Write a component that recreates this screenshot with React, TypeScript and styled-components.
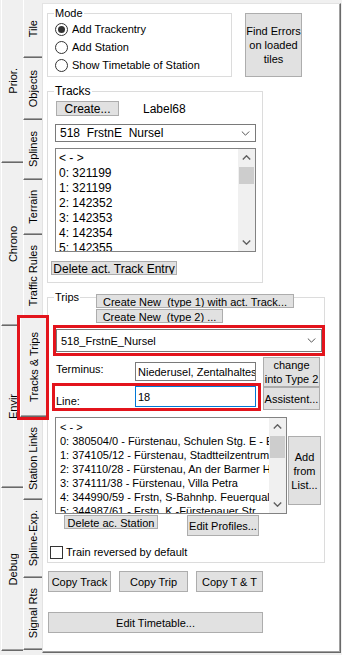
import styled, { createGlobalStyle, css } from 'styled-components';

const GlobalStyle = createGlobalStyle`
  html, body {
    margin: 0;
    padding: 0;
    background: #f0f0f0;
  }
  body {
    font-family: "Liberation Sans", Arial, sans-serif;
    font-size: 11px;
    color: #000;
  }
`;

const Window = styled.div`
  display: flex;
  width: 342px;
  height: 655px;
  overflow: hidden;
  background: #f0f0f0;
`;

// vertical tab strips on the left
const TabColumn = styled.div<{ $w: number; $ml?: number }>`
  display: flex;
  flex-direction: column;
  flex-shrink: 0;
  width: ${(p) => p.$w}px;
  margin-left: ${(p) => p.$ml ?? 0}px;
  height: 651px;
`;

const Tab = styled.div<{ $h?: number; $active?: boolean }>`
  ${(p) => (p.$h ? `height: ${p.$h}px;` : 'flex: 1;')}
  flex-shrink: 0;
  box-sizing: border-box;
  display: flex;
  align-items: center;
  justify-content: center;
  background: #f0f0f0;
  border-left: 1px solid #fff;
  border-bottom: 1px solid #696969;
  box-shadow: inset 0 -1px 0 #a0a0a0;
  ${(p) =>
    p.$active &&
    css`
      position: relative;
      z-index: 2;
      margin: 0 -4px 0 -3px;
      outline: 3px solid #e3141c;
    `}
`;

const TabText = styled.span`
  writing-mode: vertical-rl;
  transform: rotate(180deg);
  white-space: nowrap;
  font-size: 11px;
`;

const Panel = styled.div`
  flex: 1;
  margin: 3px 1px 2px 0;
  box-sizing: border-box;
  background: #fff;
  border-left: 1px solid #e3e3e3;
  border-top: 1px solid #e3e3e3;
  border-right: 1px solid #696969;
  border-bottom: 1px solid #696969;
  box-shadow: inset -1px -1px 0 #a0a0a0;
  padding: 3px 0 0 4px;
  display: flex;
  flex-direction: column;
  align-items: flex-start;
`;

const Group = styled.fieldset<{ $w: number; $mt?: number; $pb?: number }>`
  margin: ${(p) => p.$mt ?? 0}px 0 0 0;
  padding: 0 0 ${(p) => p.$pb ?? 0}px 0;
  width: ${(p) => p.$w}px;
  min-width: 0;
  box-sizing: border-box;
  border: 1px solid #dcdcdc;
  display: flex;
  flex-direction: column;
  align-items: flex-start;
`;

const Legend = styled.legend<{ $size?: number; $lh?: number }>`
  padding: 0 1px;
  margin-left: 6px;
  font-size: ${(p) => p.$size ?? 11}px;
  line-height: ${(p) => p.$lh ?? 13}px;
`;

const Row = styled.div<{ $mt?: number; $ml?: number; $gap?: number; $align?: string }>`
  display: flex;
  align-items: ${(p) => p.$align ?? 'flex-start'};
  gap: ${(p) => p.$gap ?? 0}px;
  margin: ${(p) => p.$mt ?? 0}px 0 0 ${(p) => p.$ml ?? 0}px;
`;

const Column = styled.div<{ $mt?: number; $ml?: number; $gap?: number }>`
  display: flex;
  flex-direction: column;
  align-items: flex-start;
  gap: ${(p) => p.$gap ?? 0}px;
  margin: ${(p) => p.$mt ?? 0}px 0 0 ${(p) => p.$ml ?? 0}px;
`;

const Button = styled.button<{ $w: number; $h: number; $size?: number; $mt?: number; $ml?: number }>`
  flex-shrink: 0;
  width: ${(p) => p.$w}px;
  height: ${(p) => p.$h}px;
  margin: ${(p) => p.$mt ?? 0}px 0 0 ${(p) => p.$ml ?? 0}px;
  box-sizing: border-box;
  padding: 0;
  border: 1px solid #adadad;
  background: #e1e1e1;
  color: #000;
  font-family: inherit;
  font-size: ${(p) => p.$size ?? 11}px;
  line-height: 14px;
  white-space: pre;
  text-align: center;
  overflow: hidden;
`;

const RadioRow = styled.label`
  display: flex;
  align-items: center;
  gap: 4px;
  height: 18px;
  padding-left: 7px;
  line-height: 13px;
`;

const RadioCircle = styled.span<{ $checked?: boolean }>`
  width: 13px;
  height: 13px;
  box-sizing: border-box;
  border: 1px solid #333;
  border-radius: 50%;
  background: #fff;
  display: flex;
  align-items: center;
  justify-content: center;
  &::after {
    content: '';
    width: 7px;
    height: 7px;
    border-radius: 50%;
    background: #333;
    display: ${(p) => (p.$checked ? 'block' : 'none')};
  }
`;

const Caption = styled.span<{ $size?: number }>`
  font-size: ${(p) => p.$size ?? 11}px;
  line-height: 14px;
  white-space: nowrap;
`;

const Combo = styled.div<{ $w?: number; $h: number; $size: number; $mt?: number; $ml?: number }>`
  display: flex;
  align-items: center;
  justify-content: space-between;
  box-sizing: border-box;
  width: ${(p) => (p.$w ? `${p.$w}px` : '100%')};
  height: ${(p) => p.$h}px;
  margin: ${(p) => p.$mt ?? 0}px 0 0 ${(p) => p.$ml ?? 0}px;
  padding: 0 5px 0 4px;
  border: 1px solid #7a7a7a;
  background: #fff;
  font-size: ${(p) => p.$size}px;
  white-space: pre;
`;

const Highlight = styled.div<{ $w: number; $h: number; $mt?: number; $ml?: number }>`
  box-sizing: border-box;
  width: ${(p) => p.$w}px;
  height: ${(p) => p.$h}px;
  margin: ${(p) => p.$mt ?? 0}px 0 0 ${(p) => p.$ml ?? 0}px;
  border: 3px solid #e3141c;
`;

const ComboFrame = styled(Highlight)`
  padding: 1px 0;
`;

const LineFrame = styled(Highlight)`
  display: flex;
  align-items: flex-start;
  padding-left: 1px;
`;

const ListBox = styled.div<{ $w: number; $h: number; $mt?: number; $ml?: number }>`
  display: flex;
  flex-shrink: 0;
  box-sizing: border-box;
  width: ${(p) => p.$w}px;
  height: ${(p) => p.$h}px;
  margin: ${(p) => p.$mt ?? 0}px 0 0 ${(p) => p.$ml ?? 0}px;
  border: 1px solid #828282;
  background: #fff;
`;

const ListItems = styled.div<{ $size: number; $lh: number; $pt: number; $pl: number }>`
  flex: 1;
  min-width: 0;
  overflow: hidden;
  white-space: nowrap;
  font-size: ${(p) => p.$size}px;
  line-height: ${(p) => p.$lh}px;
  padding: ${(p) => p.$pt}px 0 0 ${(p) => p.$pl}px;
`;

const ScrollBar = styled.div`
  width: 17px;
  flex-shrink: 0;
  background: #f0f0f0;
  display: flex;
  flex-direction: column;
  align-items: center;
`;

const ScrollArrow = styled.div`
  width: 17px;
  height: 17px;
  flex-shrink: 0;
  display: flex;
  align-items: center;
  justify-content: center;
`;

const ScrollThumb = styled.div<{ $h: number }>`
  width: 15px;
  height: ${(p) => p.$h}px;
  margin-top: 1px;
  background: #cdcdcd;
`;

const ScrollSpace = styled.div`
  flex: 1;
`;

const FieldGrid = styled.div`
  display: grid;
  grid-template-columns: 209px 57px;
  column-gap: 2px;
  margin: 1px 0 0 4px;
`;

const TermRow = styled.div`
  display: flex;
  align-items: flex-start;
  height: 26px;
  padding-left: 4px;
`;

const FieldLabel = styled.span<{ $mt?: number; $end?: boolean }>`
  width: 79px;
  flex-shrink: 0;
  line-height: 13px;
  margin-top: ${(p) => p.$mt ?? 0}px;
  ${(p) => p.$end && 'align-self: flex-end;'}
`;

const Edit = styled.div<{ $h: number; $focused?: boolean; $mt?: number }>`
  width: 121px;
  height: ${(p) => p.$h}px;
  margin-top: ${(p) => p.$mt ?? 0}px;
  box-sizing: border-box;
  flex-shrink: 0;
  display: flex;
  align-items: center;
  padding-left: 2px;
  border: 1px solid ${(p) => (p.$focused ? '#0078d7' : '#7a7a7a')};
  background: #fff;
  overflow: hidden;
  white-space: nowrap;
`;

const CheckRow = styled.label`
  display: flex;
  align-items: center;
  gap: 3px;
  margin: 10px 0 0 2px;
  line-height: 13px;
`;

const CheckBox = styled.span`
  width: 13px;
  height: 13px;
  box-sizing: border-box;
  border: 1px solid #333;
  background: #fff;
`;

const Chevron = ({ up, color = '#606060', width = 1.4 }: { up?: boolean; color?: string; width?: number }) => (
  <svg width="9" height="5" viewBox="0 0 9 5">
    <polyline
      points={up ? '0.8,4.5 4.5,0.8 8.2,4.5' : '0.8,0.5 4.5,4.2 8.2,0.5'}
      fill="none"
      stroke={color}
      strokeWidth={width}
    />
  </svg>
);

const Scroller = ({ thumb }: { thumb: number }) => (
  <ScrollBar>
    <ScrollArrow>
      <Chevron up />
    </ScrollArrow>
    <ScrollThumb $h={thumb} />
    <ScrollSpace />
    <ScrollArrow>
      <Chevron />
    </ScrollArrow>
  </ScrollBar>
);

const outerTabs = ['Prior.', 'Chrono', 'Envir', 'Debug'];

const innerTabs = [
  { label: 'Tile', h: 58 },
  { label: 'Objects', h: 62 },
  { label: 'Splines', h: 60 },
  { label: 'Terrain', h: 55 },
  { label: 'Traffic Rules', h: 83 },
  { label: 'Tracks & Trips', h: 99, active: true },
  { label: 'Station Links', h: 83 },
  { label: 'Spline-Exp.', h: 78 },
  { label: 'Signal Rts', h: 72 },
];

const trackEntries = ['< - >', '0: 321199', '1: 321199', '2: 142352', '3: 142353', '4: 142354', '5: 142355', '6: 142356'];

const stations = [
  '< - >',
  '0: 380504/0 - Fürstenau, Schulen Stg. E - Eingang',
  '1: 374105/12 - Fürstenau, Stadtteilzentrum',
  '2: 374110/28 - Fürstenau, An der Barmer Heide',
  '3: 374111/38 - Fürstenau, Villa Petra',
  '4: 344990/59 - Frstn, S-Bahnhp. Feuerqualle',
  '5: 344987/61 - Frstn, K.-Fürstenauer Str.',
];

export default function App() {
  return (
    <>
      <GlobalStyle />
      <Window>
        <TabColumn $w={22} $ml={1}>
          {outerTabs.map((t) => (
            <Tab key={t}>
              <TabText>{t}</TabText>
            </Tab>
          ))}
        </TabColumn>
        <TabColumn $w={19}>
          {innerTabs.map((t) => (
            <Tab key={t.label} $h={t.h} $active={t.active}>
              <TabText>{t.label}</TabText>
            </Tab>
          ))}
        </TabColumn>

        <Panel>
          <Row $gap={13}>
            <Group $w={185} $pb={2}>
              <Legend>Mode</Legend>
              <RadioRow>
                <RadioCircle $checked />
                Add Trackentry
              </RadioRow>
              <RadioRow>
                <RadioCircle />
                Add Station
              </RadioRow>
              <RadioRow>
                <RadioCircle />
                Show Timetable of Station
              </RadioRow>
            </Group>
            <Button $w={57} $h={64} $mt={6}>
              {'Find Errors\non loaded\ntiles'}
            </Button>
          </Row>

          <Group $w={216} $mt={7} $pb={7}>
            <Legend $size={12} $lh={14}>Tracks</Legend>
            <Row $mt={3} $ml={8} $gap={24} $align="center">
              <Button $w={63} $h={15} $size={12}>Create...</Button>
              <Caption $size={12}>Label68</Caption>
            </Row>
            <Combo $w={201} $h={18} $size={12} $mt={8} $ml={7}>
              <span>518  FrstnE  Nursel</span>
              <Chevron color="#555" width={1} />
            </Combo>
            <ListBox $w={201} $h={104} $mt={6} $ml={7}>
              <ListItems $size={12} $lh={15} $pt={2} $pl={3}>
                {trackEntries.map((e) => (
                  <div key={e}>{e}</div>
                ))}
              </ListItems>
              <Scroller thumb={17} />
            </ListBox>
            <Button $w={126} $h={14} $size={12} $mt={9} $ml={3}>
              Delete act. Track Entry
            </Button>
          </Group>

          <Group $w={278} $mt={8} $pb={3}>
            <Legend $lh={12}>Trips</Legend>
            <Column $mt={-9} $ml={48} $gap={1}>
              <Button $w={198} $h={14}>Create New  (type 1) with act. Track...</Button>
              <Button $w={127} $h={14}>Create New  (type 2) ...</Button>
            </Column>
            <ComboFrame $w={272} $h={31} $mt={2} $ml={5}>
              <Combo $h={23} $size={11}>
                <span>518_FrstnE_Nursel</span>
                <Chevron color="#555" width={1} />
              </Combo>
            </ComboFrame>
            <FieldGrid>
              <Column>
                <TermRow>
                  <FieldLabel $mt={6}>Terminus:</FieldLabel>
                  <Edit $h={19} $mt={5}>Niederusel, Zentalhaltestelle</Edit>
                </TermRow>
                <LineFrame $w={209} $h={28}>
                  <FieldLabel $end>Line:</FieldLabel>
                  <Edit $h={21} $focused>
                    18
                  </Edit>
                </LineFrame>
              </Column>
              <Column>
                <Button $w={57} $h={30}>{'change\ninto Type 2'}</Button>
                <Button $w={57} $h={23}>Assistent...</Button>
              </Column>
            </FieldGrid>
            <Row $mt={6} $ml={7}>
              <ListBox $w={232} $h={97}>
                <ListItems $size={11} $lh={14} $pt={2} $pl={4}>
                  {stations.map((s) => (
                    <div key={s}>{s}</div>
                  ))}
                </ListItems>
                <Scroller thumb={22} />
              </ListBox>
              <Button $w={33} $h={69} $mt={19} $ml={1}>
                {'Add\nfrom\nList...'}
              </Button>
            </Row>
            <Row $mt={1} $ml={16} $gap={29}>
              <Button $w={94} $h={14}>Delete ac. Station</Button>
              <Button $w={72} $h={21}>Edit Profiles...</Button>
            </Row>
            <CheckRow>
              <CheckBox />
              Train reversed by default
            </CheckRow>
          </Group>

          <Row $mt={8} $ml={1} $gap={8}>
            <Button $w={63} $h={21}>Copy Track</Button>
            <Button $w={69} $h={21}>Copy Trip</Button>
            <Button $w={67} $h={21}>Copy T &amp; T</Button>
          </Row>
          <Button $w={215} $h={21} $mt={20} $ml={1}>
            Edit Timetable...
          </Button>
        </Panel>
      </Window>
    </>
  );
}
